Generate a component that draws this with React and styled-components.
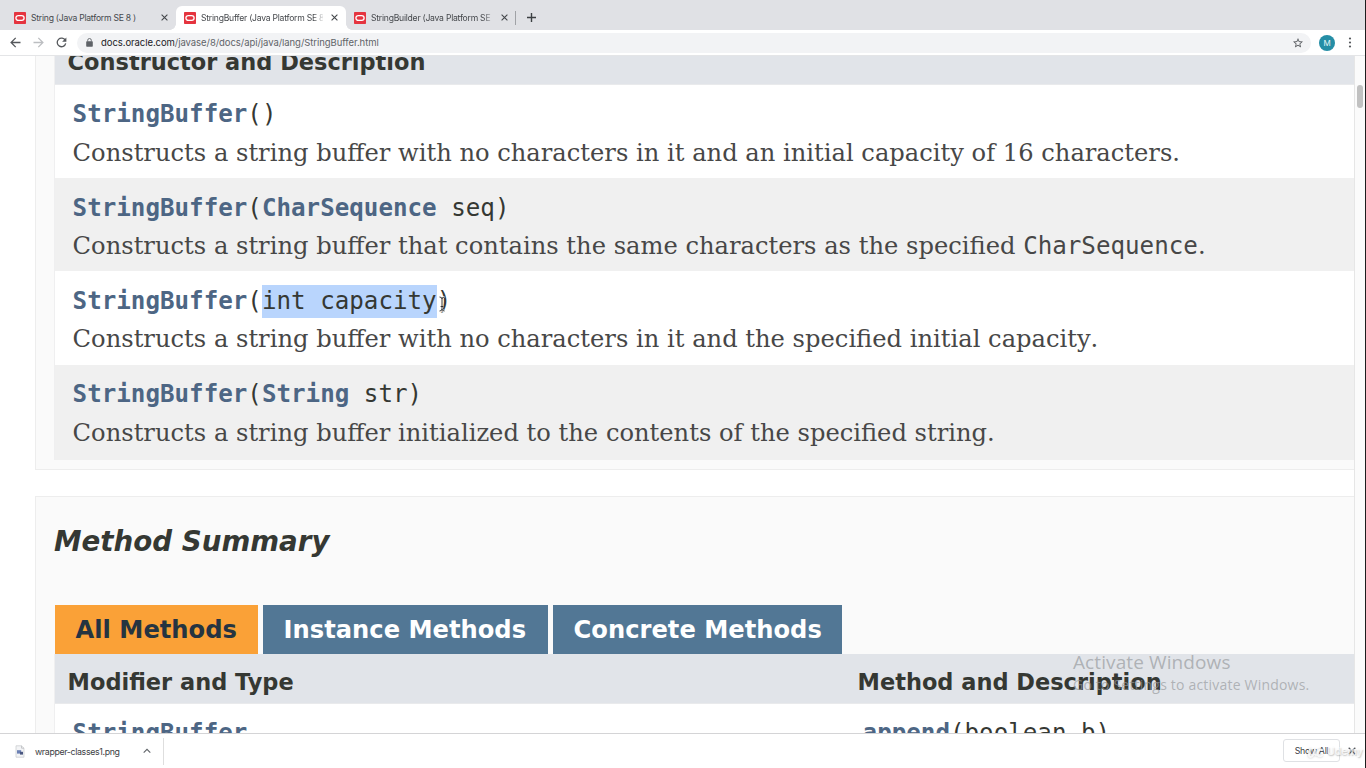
import React from "react";
import styled, { createGlobalStyle, css } from "styled-components";

const Global = createGlobalStyle`
  * { box-sizing: border-box; }
  html, body { margin: 0; background: #fff; overflow: hidden; }
`;

const ui = `Inter, Roboto, "Liberation Sans", sans-serif`;
const sans = `"DejaVu Sans", sans-serif`;
const serif = `"DejaVu Serif", serif`;
const mono = `"DejaVu Sans Mono", monospace`;

const Screen = styled.div`
  position: relative;
  display: flex;
  width: 1366px;
  height: 768px;
  overflow: hidden;
  background: #fff;
`;
const Edge = styled.div`
  width: 1px;
  flex: none;
  background: #1d1d1d;
`;
const Browser = styled.div`
  flex: 1;
  min-width: 0;
  display: flex;
  flex-direction: column;
`;

/* Tab strip */
const TabStrip = styled.div`
  height: 30px;
  flex: none;
  display: flex;
  align-items: flex-end;
  padding-left: 6px;
  background: #e0e1e5;
`;
const TabItem = styled.div`
  position: relative;
  height: 24px;
  width: 170px;
  display: flex;
  align-items: center;
  padding: 0 8px 1px 8px;
  border-radius: 6px 6px 0 0;
  ${(p) =>
    p.$active &&
    css`
      background: #fff;
      &::before,
      &::after {
        content: "";
        position: absolute;
        bottom: 0;
        width: 6px;
        height: 6px;
      }
      &::before {
        left: -6px;
        background: radial-gradient(circle at 0 0, transparent 5.5px, #fff 6px);
      }
      &::after {
        right: -6px;
        background: radial-gradient(circle at 100% 0, transparent 5.5px, #fff 6px);
      }
    `}
`;
const TabTitle = styled.span`
  flex: 1;
  margin-left: 5px;
  margin-right: 8px;
  overflow: hidden;
  white-space: nowrap;
  font: 400 8.6px/14px ${ui};
  letter-spacing: -0.24px;
  color: #45484c;
  ${(p) => p.$fade && css`mask-image: linear-gradient(90deg, #000 92%, rgba(0, 0, 0, 0.15));`}
`;
const TabRule = styled.div`
  width: 1px;
  height: 14px;
  margin: 0 12px 5px -1px;
  background: #a0a2a6;
`;
const PlusBox = styled.div`
  height: 24px;
  display: flex;
  align-items: center;
  margin-left: -1px;
  padding-bottom: 1px;
`;

/* Address bar */
const Toolbar = styled.div`
  height: 26px;
  flex: none;
  display: flex;
  align-items: center;
  padding: 0 10px 0 10px;
  border-bottom: 1px solid #e4e5e7;
  background: #fff;
`;
const NavButtons = styled.div`
  display: flex;
  gap: 12px;
  width: 67px;
`;
const Omnibox = styled.div`
  flex: 1;
  height: 20px;
  display: flex;
  align-items: center;
  padding: 0 7px 0 9px;
  border-radius: 10px;
  background: #f2f3f5;
`;
const Url = styled.span`
  flex: 1;
  margin-left: 8px;
  white-space: nowrap;
  font: 400 9.5px/16px ${ui};
  letter-spacing: -0.06px;
  color: #5f6368;
  b { font-weight: 400; color: #202124; }
`;
const Avatar = styled.div`
  width: 16px;
  height: 16px;
  margin: 0 10px 0 8px;
  border-radius: 50%;
  background: #258ea6;
  color: #e8f6f8;
  font: 400 8px/16px ${ui};
  text-align: center;
`;

/* Page viewport */
const Viewport = styled.div`
  height: 677px;
  flex: none;
  display: flex;
  overflow: hidden;
`;
const Page = styled.div`
  flex: 1;
  min-width: 0;
  padding-left: 35px;
  overflow: hidden;
`;
const ScrollTrack = styled.div`
  width: 11px;
  flex: none;
  padding: 29px 2px 0 2px;
  border-left: 1px solid #e6e6e6;
  background: #fbfbfb;
`;
const ScrollThumb = styled.div`
  width: 6px;
  height: 23px;
  border-radius: 3px;
  background: #c1c1c1;
`;
const Section = styled.section`
  border: 1px solid #ededed;
  border-right: 0;
  background: #fafafa;
  padding-left: 18px;
`;
const ConstructorSection = styled(Section)`
  height: 414px;
  border-top: 0;
`;
const MethodSection = styled(Section)`
  margin-top: 26px;
  height: 300px;
`;
const Table = styled.div`
  border-left: 1px solid #efeff0;
`;
const HeaderRow = styled.div`
  display: flex;
  height: ${(p) => p.$h}px;
  padding-left: 12.6px;
  align-items: flex-end;
  padding-bottom: ${(p) => p.$pb}px;
  background: #e1e4e9;
  border-bottom: 1px solid #e9eaec;
  font: 700 22.47px/26px ${sans};
  color: #353833;
`;
const HeaderCell = styled.div`
  width: ${(p) => p.$w || 600}px;
  flex: none;
  white-space: nowrap;
`;
const Row = styled.div`
  height: ${(p) => p.$h || 93}px;
  padding: ${(p) => p.$top || 10}px 0 0 17.6px;
  background: ${(p) => (p.$alt ? "#f0f0f0" : "#fff")};
`;
const Signature = styled.div`
  font: 400 24.2px/38px ${mono};
  color: #353833;
  white-space: pre;
`;
const Link = styled.a`
  font-weight: 700;
  color: #4d6684;
`;
const Selected = styled.span`
  padding: 2px 0 3px;
  background: #b9d5fd;
`;
const Description = styled.div`
  margin-top: ${(p) => p.$gap || 0}px;
  font: 400 24.2px/38px ${serif};
  font-kerning: none;
  color: #474747;
  white-space: nowrap;
  code { font-family: ${mono}; }
`;
const Heading = styled.h3`
  margin: 0;
  padding-top: 27px;
  height: 108px;
  font: italic 700 27.7px/36px ${sans};
  color: #353833;
`;
const MethodTabs = styled.div`
  display: flex;
  gap: 5px;
  padding-left: 1px;
`;
const MethodTab = styled.div`
  height: 49px;
  width: ${(p) => p.$w}px;
  padding: 1px 0 0 20.6px;
  font: 700 24.2px/49px ${sans};
  white-space: nowrap;
  background: ${(p) => (p.$on ? "#faa137" : "#527795")};
  color: ${(p) => (p.$on ? "#253441" : "#fff")};
`;
const MethodRow = styled(Row)`
  display: flex;
`;
const MethodCell = styled(Signature)`
  width: ${(p) => p.$w || 400}px;
`;

/* Download shelf */
const Shelf = styled.div`
  flex: 1;
  display: flex;
  align-items: center;
  border-top: 1px solid #d4d4d6;
  background: #fff;
`;
const Download = styled.div`
  width: 164px;
  height: 27px;
  display: flex;
  align-items: center;
  padding-left: 14px;
  border-right: 1px solid #dedede;
`;
const FileName = styled.span`
  width: 99px;
  margin-left: 9px;
  margin-right: 9px;
  padding-top: 1px;
  font: 400 8.8px/14px ${ui};
  letter-spacing: -0.35px;
  color: #3c4043;
  white-space: nowrap;
`;
const ShowAll = styled.div`
  width: 57px;
  height: 23px;
  margin: 0 8px 1px auto;
  border: 1px solid #dfe1e4;
  border-radius: 3px;
  font: 400 8.8px/21px ${ui};
  letter-spacing: -0.28px;
  color: #3c4043;
  text-align: center;
`;
const CloseBox = styled.div`
  display: flex;
  margin-right: 9px;
  padding-bottom: 1px;
`;

/* Overlays */
const Activate = styled.div`
  position: absolute;
  left: 1073px;
  top: 650px;
  color: rgba(150, 153, 156, 0.68);
  white-space: nowrap;
  font-family: "Open Sans", "Noto Sans", sans-serif;
`;
const ActivateTitle = styled.div`
  font-size: 19px;
  line-height: 24px;
  letter-spacing: 0.1px;
`;
const ActivateText = styled.div`
  padding-top: 1px;
  font-size: 14px;
  line-height: 20px;
  letter-spacing: 0.2px;
`;
const Cursor = styled.svg`
  position: absolute;
  left: 438px;
  top: 296px;
`;
const Brand = styled.div`
  position: absolute;
  left: 1307px;
  top: 744px;
  display: flex;
  align-items: center;
  gap: 3px;
  color: rgba(255, 255, 255, 0.72);
  font: 600 10.5px/16px ${ui};
  text-shadow: 0.5px 0.5px 1.5px rgba(110, 110, 110, 0.45);
  svg { filter: drop-shadow(0.5px 0.5px 1px rgba(110, 110, 110, 0.5)); }
`;

const Favicon = () => (
  <svg width="12" height="12" viewBox="0 0 12 12">
    <rect width="12" height="12" rx=".8" fill="#e5343f" />
    <rect x="1.9" y="3.6" width="8.2" height="4.8" rx="2.4" fill="none" stroke="#fff" strokeWidth="1.3" />
  </svg>
);
const Close = ({ size = 7, color = "#45484c" }) => (
  <svg width={size} height={size} viewBox="0 0 7 7" fill="none" stroke={color} strokeWidth="1.1">
    <path d="M.6.6l5.8 5.8M6.4.6L.6 6.4" />
  </svg>
);
const Arrow = ({ color, flip }) => (
  <svg width="11" height="11" viewBox="0 0 11 11" fill="none" stroke={color} strokeWidth="1.3">
    <path d={flip ? "M.5 5.5h9M5.3.9l4.6 4.6-4.6 4.6" : "M10.5 5.5h-9M5.7.9L1.1 5.5l4.6 4.6"} />
  </svg>
);

const tabs = [
  { title: "String (Java Platform SE 8 )" },
  { title: "StringBuffer (Java Platform SE 8 )", active: true, fade: true },
  { title: "StringBuilder (Java Platform SE 8 )", fade: true },
];

export default function App() {
  return (
    <Screen>
      <Global />
      <Browser>
        <TabStrip>
          {tabs.map((t) => (
            <TabItem key={t.title} $active={t.active}>
              <Favicon />
              <TabTitle $fade={t.fade}>{t.title}</TabTitle>
              <Close />
            </TabItem>
          ))}
          <TabRule />
          <PlusBox>
            <svg width="9" height="9" viewBox="0 0 9 9" stroke="#3c4043" strokeWidth="1.4">
              <path d="M4.5 0v9M0 4.5h9" />
            </svg>
          </PlusBox>
        </TabStrip>

        <Toolbar>
          <NavButtons>
            <Arrow color="#55585c" />
            <Arrow color="#bcbec1" flip />
            <svg width="11" height="11" viewBox="0 0 11 11">
              <path d="M9.3 3.4A4.3 4.3 0 1 0 9.7 6.4" fill="none" stroke="#55585c" strokeWidth="1.3" />
              <path d="M10.4.4v4.3H6.1z" fill="#55585c" />
            </svg>
          </NavButtons>
          <Omnibox>
            <svg width="7" height="9" viewBox="0 0 7 9">
              <rect x=".2" y="3.2" width="6.6" height="5.5" rx=".7" fill="#5f6368" />
              <path d="M1.7 3.5V2.3a1.8 1.8 0 0 1 3.6 0v1.2" fill="none" stroke="#5f6368" strokeWidth=".9" />
            </svg>
            <Url><b>docs.oracle.com</b>/javase/8/docs/api/java/lang/StringBuffer.html</Url>
            <svg width="12" height="12" viewBox="0 0 24 24" fill="#55585c">
              <path d="M22 9.24l-7.19-.62L12 2 9.19 8.63 2 9.24l5.46 4.73L5.82 21 12 17.27 18.18 21l-1.63-7.03L22 9.24zM12 15.4l-3.76 2.27 1-4.28-3.32-2.88 4.38-.38L12 6.1l1.71 4.04 4.38.38-3.32 2.88 1 4.28L12 15.4z" />
            </svg>
          </Omnibox>
          <Avatar>M</Avatar>
          <svg width="10" height="11" viewBox="0 0 10 11" fill="#55585c">
            <circle cx="5" cy="1.5" r="1.1" /><circle cx="5" cy="5.5" r="1.1" /><circle cx="5" cy="9.5" r="1.1" />
          </svg>
        </Toolbar>

        <Viewport>
          <Page>
            <ConstructorSection>
              <Table>
                <HeaderRow $h={29} $pb={9}>
                  <HeaderCell>Constructor and Description</HeaderCell>
                </HeaderRow>
                <Row>
                  <Signature><Link>StringBuffer</Link>()</Signature>
                  <Description $gap={1}>Constructs a string buffer with no characters in it and an initial capacity of 16 characters.</Description>
                </Row>
                <Row $alt $top={11}>
                  <Signature><Link>StringBuffer</Link>(<Link>CharSequence</Link> seq)</Signature>
                  <Description>Constructs a string buffer that contains the same characters as the specified <code>CharSequence</code>.</Description>
                </Row>
                <Row $h={94} $top={11}>
                  <Signature><Link>StringBuffer</Link>(<Selected>int capacity</Selected>)</Signature>
                  <Description>Constructs a string buffer with no characters in it and the specified initial capacity.</Description>
                </Row>
                <Row $alt $h={95}>
                  <Signature><Link>StringBuffer</Link>(<Link>String</Link> str)</Signature>
                  <Description $gap={1}>Constructs a string buffer initialized to the contents of the specified string.</Description>
                </Row>
              </Table>
            </ConstructorSection>

            <MethodSection>
              <Heading>Method Summary</Heading>
              <MethodTabs>
                <MethodTab $on $w={203}>All Methods</MethodTab>
                <MethodTab $w={285}>Instance Methods</MethodTab>
                <MethodTab $w={289}>Concrete Methods</MethodTab>
              </MethodTabs>
              <Table>
                <HeaderRow $h={50} $pb={8}>
                  <HeaderCell $w={790}>Modifier and Type</HeaderCell>
                  <HeaderCell $w={400}>Method and Description</HeaderCell>
                </HeaderRow>
                <MethodRow>
                  <MethodCell $w={790}><Link>StringBuffer</Link></MethodCell>
                  <MethodCell><Link>append</Link>(boolean b)</MethodCell>
                </MethodRow>
              </Table>
            </MethodSection>
          </Page>
          <ScrollTrack><ScrollThumb /></ScrollTrack>
        </Viewport>

        <Shelf>
          <Download>
            <svg width="12" height="13" viewBox="0 0 12 13">
              <path d="M2 .8h5.500l2.500 2.400v9H2z" fill="#f3f4f6" stroke="#c6c8cb" strokeWidth=".7" />
              <path d="M7.500.8v2.400H10" fill="none" stroke="#b4b6ba" strokeWidth=".7" />
              <rect x="3" y="5.200" width="4.200" height="3.400" fill="#6c80b4" />
              <rect x="6" y="6.800" width="3" height="2.800" fill="#4a5680" />
            </svg>
            <FileName>wrapper-classes1.png</FileName>
            <svg width="8" height="6" viewBox="0 0 8 6" fill="none" stroke="#5f6368" strokeWidth="1.1">
              <path d="M.7 4.7L4 1.4l3.3 3.3" />
            </svg>
          </Download>
          <ShowAll>Show All</ShowAll>
          <CloseBox><Close size={8} color="#55585c" /></CloseBox>
        </Shelf>
      </Browser>
      <Edge />

      <Activate>
        <ActivateTitle>Activate Windows</ActivateTitle>
        <ActivateText>Go to Settings to activate Windows.</ActivateText>
      </Activate>
      <Cursor width="8" height="16" viewBox="0 0 8 16" fill="none">
        <path d="M1.500 1Q4 1 4 3Q4 1 6.500 1M4 3v10M1.500 15Q4 15 4 13Q4 15 6.500 15M2.600 10.500h2.800" stroke="#fff" strokeWidth="2.2" />
        <path d="M1.500 1Q4 1 4 3Q4 1 6.500 1M4 3v10M1.500 15Q4 15 4 13Q4 15 6.500 15M2.600 10.500h2.800" stroke="#222" strokeWidth=".9" />
      </Cursor>
      <Brand>
        <svg width="17" height="16" viewBox="0 0 17 16" fill="none" stroke="#fff" strokeOpacity=".8" strokeWidth="2" strokeLinecap="round">
          <path d="M3 5.500c-1.600 4-1.400 7.500 .6 7.500s3.600-4 4.400-7.500c-.6 4-.2 5.500 1 5.500M15 6c-2.800-1-4.500 1-4.500 3.500s2 3.500 4.500 2" />
        </svg>
        Udemy
      </Brand>
    </Screen>
  );
}
